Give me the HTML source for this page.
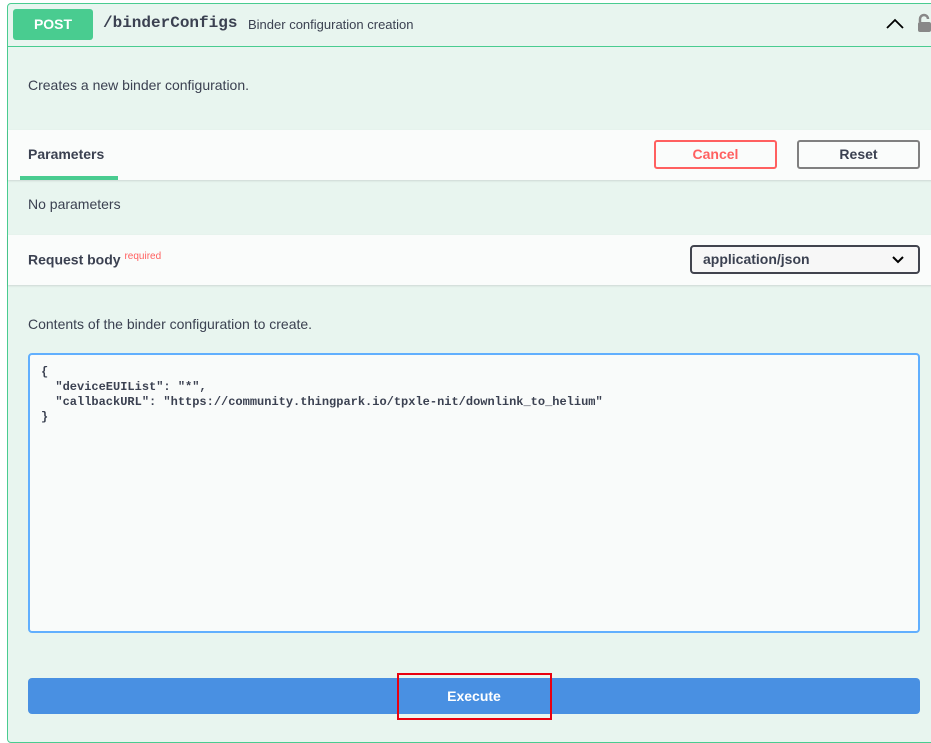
<!DOCTYPE html>
<html><head><style>
*{margin:0;padding:0;box-sizing:border-box}
body{width:931px;height:732px;background:#fff;font-family:"Liberation Sans",sans-serif;color:#3b4151;position:relative;overflow:hidden}
.op{position:absolute;left:7px;top:3px;width:940px;height:740px;background:#e8f5ef;border:1px solid #49cc90;border-radius:4px}
.a{position:absolute}
.hdr{left:7px;top:46px;width:930px;height:1px;background:#49cc90}
.post{left:13px;top:9px;width:80px;height:31px;background:#49cc90;border-radius:3px;color:#fff;font-weight:bold;font-size:14px;text-align:center;line-height:31px}
.band{left:8px;width:930px;background:#fafcfb;box-shadow:0 1px 2px rgba(0,0,0,.12)}
.btn{height:29px;border:2px solid;border-radius:3px;font-weight:bold;font-size:14px;text-align:center;line-height:25px}
</style></head><body>
<div class="op"></div>
<div class="a hdr"></div>
<div class="a post">POST</div>
<div class="a" style="left:103px;top:14px;font-family:'Liberation Mono',monospace;font-weight:bold;font-size:16px">/binderConfigs</div>
<div class="a" style="left:248px;top:17px;font-size:13px">Binder configuration creation</div>
<svg class="a" style="left:885px;top:17px" width="20" height="14"><path d="M2 11 L10 3 L18 11" stroke="#000" stroke-width="1.8" fill="none"/></svg>
<svg class="a" style="left:917px;top:13px" width="14" height="20"><path d="M3 9 V6 a4 4 0 0 1 8 0" stroke="#888" stroke-width="2.5" fill="none"/><rect x="1" y="9" width="13" height="10" rx="2" fill="#888"/></svg>
<div class="a" style="left:28px;top:77px;font-size:14px">Creates a new binder configuration.</div>
<div class="a band" style="top:130px;height:50px"></div>
<div class="a" style="left:28px;top:146px;font-size:14px;font-weight:bold">Parameters</div>
<div class="a" style="left:20px;top:176px;width:98px;height:4px;background:#49cc90"></div>
<div class="a btn" style="left:654px;top:140px;width:123px;border-color:#ff6060;color:#ff6060">Cancel</div>
<div class="a btn" style="left:797px;top:140px;width:123px;border-color:#808080;color:#3b4151">Reset</div>
<div class="a" style="left:28px;top:196px;font-size:14px">No parameters</div>
<div class="a band" style="top:235px;height:50px"></div>
<div class="a" style="left:28px;top:251px;font-size:14px;font-weight:bold">Request body <sup style="color:#ff6060;font-size:10px;font-weight:normal">required</sup></div>
<div class="a" style="left:690px;top:245px;width:230px;height:29px;border:2px solid #41444e;border-radius:4px;background:#f7f7f7;font-weight:bold;font-size:14px;line-height:25px;padding-left:11px">application/json
<svg style="position:absolute;right:14px;top:9px" width="12" height="8"><path d="M1 1 L6 6 L11 1" stroke="#000" stroke-width="2" fill="none"/></svg></div>
<div class="a" style="left:28px;top:316px;font-size:14px">Contents of the binder configuration to create.</div>
<div class="a" style="left:28px;top:353px;width:892px;height:280px;border:2px solid #61affe;border-radius:4px;background:#f9fbfa;padding:10px 11px;font-family:'Liberation Mono',monospace;font-weight:bold;font-size:12px;line-height:15px;white-space:pre">{
  "deviceEUIList": "*",
  "callbackURL": "https://community.thingpark.io/tpxle-nit/downlink_to_helium"
}</div>
<div class="a" style="left:28px;top:678px;width:892px;height:36px;background:#4990e2;border-radius:4px;color:#fff;font-weight:bold;font-size:14px;text-align:center;line-height:36px">Execute</div>
<div class="a" style="left:397px;top:673px;width:155px;height:47px;border:2px solid #e8000f"></div>
</body></html>
